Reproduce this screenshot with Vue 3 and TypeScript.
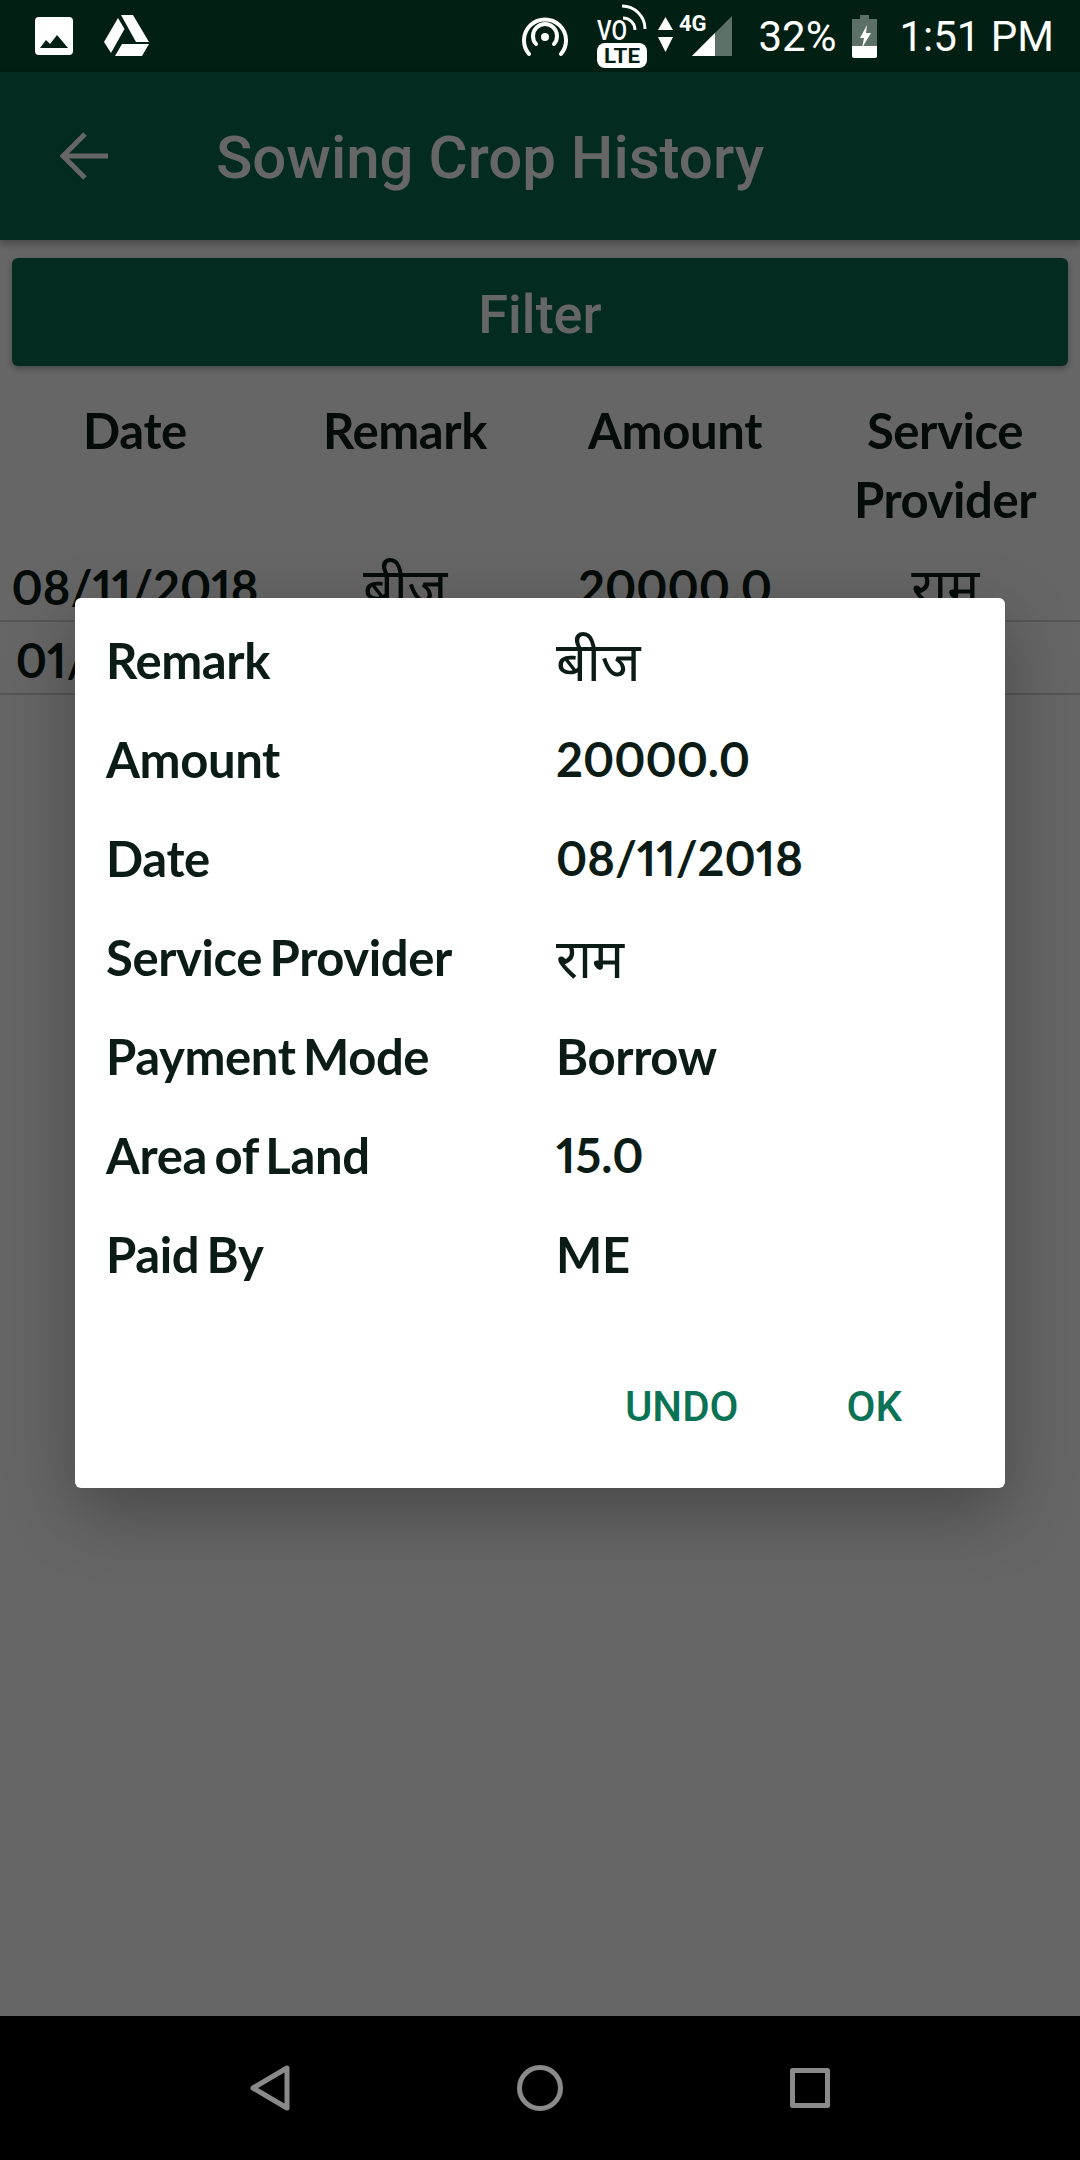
<template>
  <div class="phone">
    <div class="status-bar">
      <div class="status-left">
        <svg class="ic-image" width="38" height="38" viewBox="0 0 38 38">
          <rect width="38" height="38" rx="4" fill="#fff" />
          <path d="M5 31 L11 23 L15 27 L22 18 L33 31 Z" fill="#021f14" />
        </svg>
        <svg class="ic-drive" width="46" height="42" viewBox="0 0 46 42">
          <path d="M18 0 H30 L46 27 H33 Z" fill="#fff" />
          <path d="M15 3 L21.500 14 L8 38 L1 27 Z" fill="#fff" />
          <path d="M19 29 H46 L39 41 H12 Z" fill="#fff" />
        </svg>
      </div>
      <div class="status-right">
        <svg class="ic-hotspot" width="46" height="42" viewBox="0 0 46 42" fill="none" stroke="#fff" stroke-width="4" stroke-linecap="round">
          <circle cx="23" cy="22" r="4" fill="#fff" stroke="none" />
          <path d="M14 29 A12 12 0 1 1 32 29" />
          <path d="M7 39 A21 21 0 1 1 39 39" />
        </svg>
        <svg class="ic-volte" width="50" height="66" viewBox="0 0 50 66">
          <text x="0" y="37" class="vo" textLength="30" lengthAdjust="spacingAndGlyphs">VO</text>
          <path d="M26 15 A12 12 0 0 1 38 27" fill="none" stroke="#fff" stroke-width="3" />
          <path d="M25 3 A23 23 0 0 1 48 26" fill="none" stroke="#fff" stroke-width="3" />
          <rect x="0" y="40" width="50" height="25" rx="8" fill="#fff" />
          <text x="7" y="60" class="lte" textLength="36" lengthAdjust="spacingAndGlyphs">LTE</text>
        </svg>
        <svg class="ic-signal" width="78" height="42" viewBox="0 0 78 42">
          <path d="M3 15 L10.500 2 L18 15 Z M3 22 H18 L10.500 37 Z" fill="#fff" />
          <text x="24" y="16" class="four-g">4G</text>
          <path d="M77 1 V41 H37 Z" fill="#5d7068" />
          <path d="M60 18 V41 H37 Z" fill="#fff" />
        </svg>
        <span class="battery-pct">32%</span>
        <svg class="ic-battery" width="25" height="43" viewBox="0 0 25 43">
          <path d="M8 0 H17 V4 H25 V31 H0 V4 H8 Z" fill="#5d7068" />
          <path d="M0 31 H25 V41 Q25 43 23 43 H2 Q0 43 0 41 Z" fill="#fff" />
          <path d="M15 10 L8 23 H12 L10 33 L19 18 H14 Z" fill="#fff" />
        </svg>
        <span class="clock">1:51 PM</span>
      </div>
    </div>

    <div class="screen">
      <header class="app-bar">
        <svg class="back" width="48" height="48" viewBox="0 0 48 48" fill="none" stroke="#fff" stroke-width="5">
          <path d="M48 24 H3" />
          <path d="M25 2 L3 24 L25 46" />
        </svg>
        <h1 class="title">Sowing Crop History</h1>
      </header>

      <button class="filter">Filter</button>

      <div class="table-head">
        <div v-for="col in columns" :key="col" class="cell">{{ col }}</div>
      </div>
      <div v-for="(row, i) in rows" :key="i" class="table-row">
        <div v-for="(val, j) in row" :key="j" class="cell" :class="valueClass(val)">{{ val }}</div>
      </div>

      <div class="overlay">
        <div class="dialog">
          <div class="details">
            <div v-for="item in details" :key="item.label" class="detail">
              <span class="label">{{ item.label }}</span>
              <span class="value" :class="valueClass(item.value)">{{ item.value }}</span>
            </div>
          </div>
          <div class="actions">
            <span class="action undo">UNDO</span>
            <span class="action">OK</span>
          </div>
        </div>
      </div>
    </div>

    <nav class="nav-bar">
      <svg width="40" height="46" viewBox="0 0 40 46" fill="none" stroke="#8a8a8a" stroke-width="5" stroke-linejoin="round">
        <path d="M37 3 V43 L3 23 Z" />
      </svg>
      <svg width="46" height="46" viewBox="0 0 46 46" fill="none" stroke="#8a8a8a" stroke-width="5">
        <circle cx="23" cy="23" r="20.500" />
      </svg>
      <svg width="40" height="40" viewBox="0 0 40 40" fill="none" stroke="#8a8a8a" stroke-width="5" stroke-linejoin="round">
        <rect x="2.500" y="2.500" width="35" height="35" />
      </svg>
    </nav>
  </div>
</template>

<script setup lang="ts">
const columns = ['Date', 'Remark', 'Amount', 'Service Provider']

const rows = [
  ['08/11/2018', 'बीज', '20000.0', 'राम'],
  ['01/11/2018', 'बीज', '20000.0', 'राम'],
]

const details = [
  { label: 'Remark', value: 'बीज' },
  { label: 'Amount', value: '20000.0' },
  { label: 'Date', value: '08/11/2018' },
  { label: 'Service Provider', value: 'राम' },
  { label: 'Payment Mode', value: 'Borrow' },
  { label: 'Area of Land', value: '15.0' },
  { label: 'Paid By', value: 'ME' },
]

const valueClass = (val: string) => {
  if (/^[\d./]+$/.test(val)) return 'num'
  if (/[\u0900-\u097f]/.test(val)) return 'hindi'
  return ''
}
</script>

<style>
html,
body {
  margin: 0;
  background: #000;
}
</style>

<style scoped>
.phone {
  width: 1080px;
  height: 2160px;
  display: flex;
  flex-direction: column;
  font-family: Lato, "Noto Sans", sans-serif;
  overflow: hidden;
}

.status-bar {
  height: 72px;
  flex: none;
  background: #021f14;
  color: #fff;
  display: flex;
  justify-content: space-between;
  align-items: center;
  font-family: Roboto, sans-serif;
}
.status-left {
  display: flex;
  align-items: center;
  gap: 30px;
  padding-left: 35px;
}
.status-right {
  display: flex;
  align-items: center;
  padding-right: 26px;
}
.ic-hotspot {
  margin-right: 29px;
}
.ic-volte {
  margin-right: 8px;
}
.ic-signal {
  margin-right: 25px;
}
.battery-pct {
  font-size: 42px;
  margin-right: 16px;
}
.ic-battery {
  margin-right: 22px;
}
.clock {
  font-size: 42px;
}
.vo {
  font: 500 28px Roboto, sans-serif;
  fill: #fff;
}
.lte {
  font: 700 21px Roboto, sans-serif;
  fill: #021f14;
}
.four-g {
  font: 700 22px Roboto, sans-serif;
  fill: #fff;
}

.screen {
  position: relative;
  flex: 1;
  background: #fff;
  color: #0a1c15;
}
.app-bar {
  height: 168px;
  background: #086b50;
  color: #fff;
  display: flex;
  align-items: center;
  padding-left: 60px;
  box-sizing: border-box;
  box-shadow: 0 4px 8px rgba(0, 0, 0, 0.3);
}
.title {
  margin: 2px 0 0 108px;
  font: 500 60px Roboto, sans-serif;
}
.filter {
  display: block;
  width: 1056px;
  height: 108px;
  margin: 18px 12px 0;
  padding: 4px 0 0;
  border: 0;
  border-radius: 6px;
  background: #086b50;
  color: #fff;
  font: 500 54px Roboto, sans-serif;
  box-shadow: 0 3px 6px rgba(0, 0, 0, 0.3);
}

.table-head,
.table-row {
  display: grid;
  grid-template-columns: repeat(4, 270px);
  text-align: center;
  font-size: 49px;
  font-weight: 700;
  letter-spacing: -0.4px;
  word-spacing: -4px;
}
.table-head {
  line-height: 69px;
  padding: 30px 0 0;
  height: 183px;
  box-sizing: border-box;
}
.cell {
  padding: 0 40px;
}
.table-row {
  height: 73px;
  line-height: 76px;
  box-sizing: border-box;
  border-bottom: 2px solid #d8d8d8;
}
.table-row .cell {
  padding: 0;
}

.num {
  font-variant-numeric: proportional-nums;
  font-size: 47px;
  letter-spacing: 0;
}
.hindi {
  font-weight: 400;
  font-size: 54px;
}

.overlay {
  position: absolute;
  inset: 0;
  background: rgba(0, 0, 0, 0.6);
  padding: 526px 75px 0;
}
.dialog {
  height: 890px;
  box-sizing: border-box;
  background: #fff;
  border-radius: 6px;
  padding-top: 13px;
  box-shadow: 0 24px 70px rgba(0, 0, 0, 0.3);
}
.detail {
  display: grid;
  grid-template-columns: 450px 1fr;
  height: 99px;
  line-height: 99px;
  padding-left: 31px;
  font-size: 49px;
  font-weight: 700;
  letter-spacing: -0.4px;
  word-spacing: -4px;
}
.actions {
  display: flex;
  justify-content: flex-end;
  gap: 108px;
  margin-top: 78px;
  padding-right: 103px;
}
.action {
  font: 500 42px Roboto, sans-serif;
  color: #0a7355;
}

.nav-bar {
  height: 144px;
  flex: none;
  background: #000;
  display: grid;
  grid-template-columns: repeat(3, 270px);
  justify-content: center;
  justify-items: center;
  align-items: center;
}
</style>
